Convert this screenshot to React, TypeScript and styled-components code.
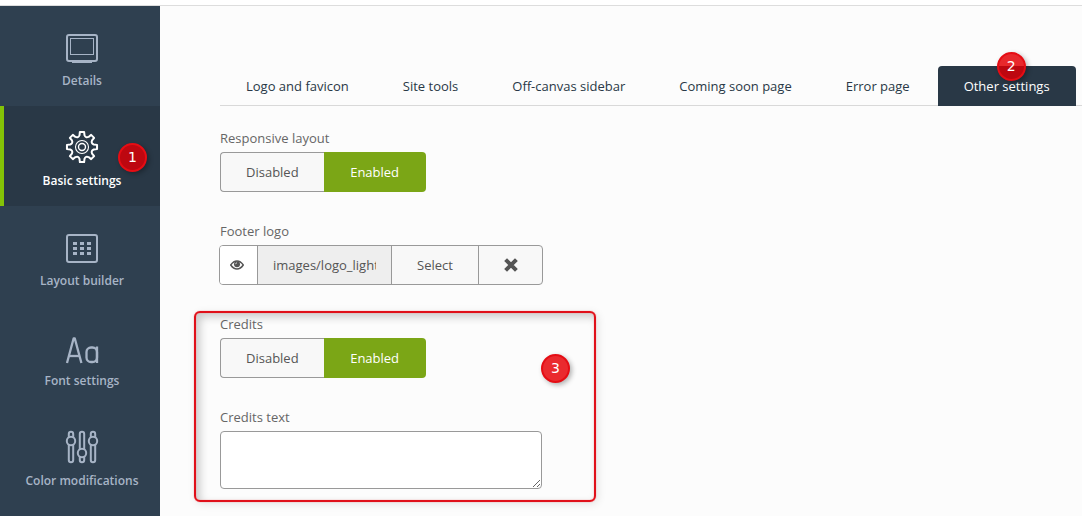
import React from "react";
import styled, { createGlobalStyle, css } from "styled-components";

const GlobalStyle = createGlobalStyle`
  *, *::before, *::after { box-sizing: border-box; }
  html, body, #root { height: 100%; }
  body {
    margin: 0;
    background: #fcfcfc;
    color: #666;
    font: 13px/20px "Open Sans", sans-serif;
    overflow: hidden;
  }
  button, input, textarea { font: inherit; color: inherit; }
`;

const Page = styled.div`
  display: flex;
  flex-direction: column;
  min-height: 100%;
`;

const TopBar = styled.header`
  height: 6px;
  flex: none;
  background: #fff;
  border-bottom: 1px solid #ddd;
`;

const Body = styled.div`
  display: flex;
  flex: 1;
`;

const Sidebar = styled.nav`
  flex: none;
  width: 160px;
  background: #2f4050;
`;

const NavItem = styled.a<{ $active?: boolean }>`
  position: relative;
  display: flex;
  flex-direction: column;
  align-items: center;
  gap: 7px;
  height: 100px;
  padding: 24px 0 0 4px;
  color: #a7b4c6;
  font-size: 12px;
  font-weight: 600;
  text-decoration: none;
  ${(p) =>
    p.$active &&
    css`
      color: #fff;
      background: #293846;
      box-shadow: inset 4px 0 #84c307;
    `}

  svg {
    display: block;
    width: 34px;
    height: 34px;
    fill: none;
    stroke: currentColor;
    stroke-width: 2;
  }
`;

const Content = styled.main`
  flex: 1;
  min-width: 0;
  padding: 60px 0 20px 60px;
`;

const Tabs = styled.div`
  display: flex;
  gap: 2px;
  border-bottom: 1px solid #d9d9d9;
`;

const Tab = styled.button<{ $active?: boolean }>`
  position: relative;
  height: 40px;
  margin: 0 0 -1px;
  padding: 0 26px;
  border: 0;
  border-radius: 4px 4px 0 0;
  white-space: nowrap;
  color: ${(p) => (p.$active ? "#fff" : "#293846")};
  background: ${(p) => (p.$active ? "#293846" : "transparent")};
`;

const Form = styled.form`
  display: flex;
  flex-direction: column;
  align-items: flex-start;
  gap: 29px;
  padding-top: 22px;
`;

const Field = styled.div`
  display: flex;
  flex-direction: column;
  align-items: flex-start;
  gap: 4px;
`;

const Highlighted = styled.section`
  position: relative;
  display: flex;
  flex-direction: column;
  gap: 29px;
`;

const HighlightFrame = styled.div`
  position: absolute;
  top: -3px;
  left: -26px;
  width: 402px;
  height: 191px;
  border: 2px solid #e0101a;
  border-radius: 6px;
  box-shadow: 0 0 1px #f55, 2px 2px 8px rgba(0, 0, 0, 0.1),
    inset 0 0 1px #f55, inset 4px 4px 8px rgba(0, 0, 0, 0.2);
  pointer-events: none;
`;

const Label = styled.label`
  display: block;
  height: 20px;
`;

const Toggle = styled.div`
  display: flex;
`;

const Option = styled.button<{ $on?: boolean }>`
  height: 40px;
  padding: 0 25px;
  border: 1px solid #999;
  border-right: 0;
  border-radius: 4px 0 0 4px;
  background: #f8f8f8;
  color: #555;
  ${(p) =>
    p.$on &&
    css`
      min-width: 102px;
      border: 0;
      border-radius: 0 4px 4px 0;
      background: #7ba616;
      color: #fff;
    `}
`;

const Picker = styled.div`
  display: flex;
  height: 40px;
  margin-left: -1px;
  border: 1px solid #999;
  border-radius: 4px;
  background: #f8f8f8;
  color: #555;
  overflow: hidden;
`;

const Preview = styled.span`
  display: flex;
  align-items: center;
  justify-content: center;
  width: 37px;
  padding-right: 3px;
  background: #fff;
`;

const PathInput = styled.input`
  width: 134px;
  padding: 0 15px;
  border: 0;
  border-left: 1px solid #999;
  border-radius: 0;
  background: #eee;
`;

const PickerButton = styled.button`
  display: flex;
  align-items: center;
  padding: 0 25px 0 25px;
  border: 0;
  border-left: 1px solid #999;
  background: transparent;

  &:last-child {
    padding-right: 24px;
  }
`;

const TextArea = styled.textarea`
  display: block;
  width: 322px;
  height: 58px;
  padding: 8px;
  border: 1px solid #999;
  border-radius: 4px;
  background: #fff;
`;

const Badge = styled.span<{ $x: number; $y: number; $fill: string }>`
  position: absolute;
  left: ${(p) => p.$x}px;
  top: ${(p) => p.$y}px;
  width: 29px;
  height: 29px;
  border: 2px solid #e50d14;
  border-radius: 50%;
  background: ${(p) => p.$fill};
  box-shadow: 2px 2px 5px rgba(0, 0, 0, 0.3);
  color: #fff;
  font: 14px/24px "DejaVu Sans", sans-serif;
  text-align: center;
`;

const MonitorIcon = () => (
  <svg viewBox="0 0 34 34" aria-hidden="true">
    <rect x="2" y="5" width="30" height="26" rx="2" />
    <rect x="5.5" y="8.5" width="23" height="16" strokeWidth="1" />
    <path d="M7 32.5h20" strokeWidth="1" />
    <path d="M14 31.5h6" />
  </svg>
);

const gearPoints = () => {
  const parts: string[] = [];
  const at = (r: number, deg: number) => {
    const a = (deg * Math.PI) / 180;
    return `${(17 + r * Math.cos(a)).toFixed(2)} ${(17 + r * Math.sin(a)).toFixed(2)}`;
  };
  for (let i = 0; i < 8; i++) {
    const a = i * 45;
    parts.push(
      `${i ? "L" : "M"}${at(15.2, a - 8)} L${at(15.2, a + 8)} L${at(12, a + 12)} Q${at(9.5, a + 22.5)} ${at(12, a + 33)}`
    );
  }
  return parts.join(" ") + "Z";
};

const GearIcon = () => (
  <svg viewBox="0 0 34 34" strokeLinejoin="round" aria-hidden="true">
    <path d={gearPoints()} />
    <circle cx="17" cy="17" r="6.5" strokeWidth="1.1" />
    <circle cx="17" cy="17" r="3.5" strokeWidth="1.4" />
  </svg>
);

const GridIcon = () => (
  <svg viewBox="0 0 34 34" aria-hidden="true">
    <rect x="2" y="5" width="30" height="27" rx="2" />
    {[12, 17, 22].map((y) =>
      [8, 15, 22].map((x) => (
        <rect key={`${x}-${y}`} x={x} y={y} width="4" height="3" fill="currentColor" stroke="none" />
      ))
    )}
  </svg>
);

const TypeIcon = () => (
  <svg viewBox="0 0 34 34" strokeLinejoin="round" aria-hidden="true">
    <g strokeWidth="2.3">
      <polyline points="2,33 8.6,8.5 9.8,8.5 16.4,33" />
      <line x1="4" y1="26" x2="14.5" y2="26" />
      <rect x="21.5" y="17.5" width="10.5" height="14.5" rx="4.5" />
      <line x1="32" y1="16.5" x2="32" y2="33" />
    </g>
  </svg>
);

const SlidersIcon = () => (
  <svg viewBox="0 0 34 34" aria-hidden="true">
    {[
      { x: 6, y: 11 },
      { x: 17, y: 23 },
      { x: 28, y: 11 },
    ].map(({ x, y }) => (
      <g key={x}>
        <path
          d={`M${x - 2.2} ${y - 3.5}V4a2.2 2.2 0 0 1 4.4 0V${y - 3.5}M${x - 2.2} ${y + 3.5}V30a2.2 2.2 0 0 0 4.4 0V${y + 3.5}`}
        />
        <circle cx={x} cy={y} r="4.2" />
      </g>
    ))}
  </svg>
);

const EyeIcon = () => (
  <svg width="14" height="10" viewBox="0 0 14 10" role="img" aria-label="Preview">
    <path d="M.7 5Q3.5 1 7 1t6.3 4Q10.5 9 7 9T.7 5Z" fill="none" stroke="#555" strokeWidth="1.4" />
    <circle cx="7" cy="4.3" r="3" fill="#555" />
    <path d="M5.5 4.2Q5.6 2.9 7 2.8" fill="none" stroke="#fff" strokeWidth=".7" />
  </svg>
);

const CrossIcon = () => (
  <svg width="14" height="14" viewBox="0 0 14 14" aria-hidden="true">
    <path d="M1.6 1.6l10.8 10.8M12.4 1.6L1.6 12.4" stroke="#555" strokeWidth="4" />
  </svg>
);

const navItems = [
  { label: "Details", Icon: MonitorIcon },
  { label: "Basic settings", Icon: GearIcon },
  { label: "Layout builder", Icon: GridIcon },
  { label: "Font settings", Icon: TypeIcon },
  { label: "Color modifications", Icon: SlidersIcon },
];

const tabs = [
  "Logo and favicon",
  "Site tools",
  "Off-canvas sidebar",
  "Coming soon page",
  "Error page",
  "Other settings",
];

const ToggleField = ({ label, id }: { label: string; id: string }) => (
  <Field>
    <Label as="span" id={id}>{label}</Label>
    <Toggle role="group" aria-labelledby={id}>
      <Option type="button" aria-pressed={false}>Disabled</Option>
      <Option type="button" aria-pressed $on>Enabled</Option>
    </Toggle>
  </Field>
);

export default function App() {
  return (
    <>
      <GlobalStyle />
      <Page>
        <TopBar />
        <Body>
          <Sidebar>
            {navItems.map(({ label, Icon }) => {
              const active = label === "Basic settings";
              return (
                <NavItem key={label} href="#" $active={active}>
                  <Icon />
                  {label}
                  {active && <Badge $x={118} $y={37} $fill="#bd0710">1</Badge>}
                </NavItem>
              );
            })}
          </Sidebar>
          <Content>
            <Tabs role="tablist">
              {tabs.map((label) => {
                const active = label === "Other settings";
                return (
                  <Tab key={label} type="button" role="tab" aria-selected={active} $active={active}>
                    {label}
                    {active && (
                      <Badge $x={59} $y={-14} $fill="linear-gradient(#e8282c 50%, #bd0710 50%)">2</Badge>
                    )}
                  </Tab>
                );
              })}
            </Tabs>
            <Form>
              <ToggleField label="Responsive layout" id="responsive" />
              <Field>
                <Label htmlFor="footer-logo">Footer logo</Label>
                <Picker>
                  <Preview><EyeIcon /></Preview>
                  <PathInput id="footer-logo" readOnly defaultValue="images/logo_light.png" />
                  <PickerButton type="button">Select</PickerButton>
                  <PickerButton type="button" aria-label="Clear"><CrossIcon /></PickerButton>
                </Picker>
              </Field>
              <Highlighted>
                <ToggleField label="Credits" id="credits" />
                <Field>
                  <Label htmlFor="credits-text">Credits text</Label>
                  <TextArea id="credits-text" />
                </Field>
                <HighlightFrame />
                <Badge $x={321} $y={40} $fill="#ea2a2e">3</Badge>
              </Highlighted>
            </Form>
          </Content>
        </Body>
      </Page>
    </>
  );
}
